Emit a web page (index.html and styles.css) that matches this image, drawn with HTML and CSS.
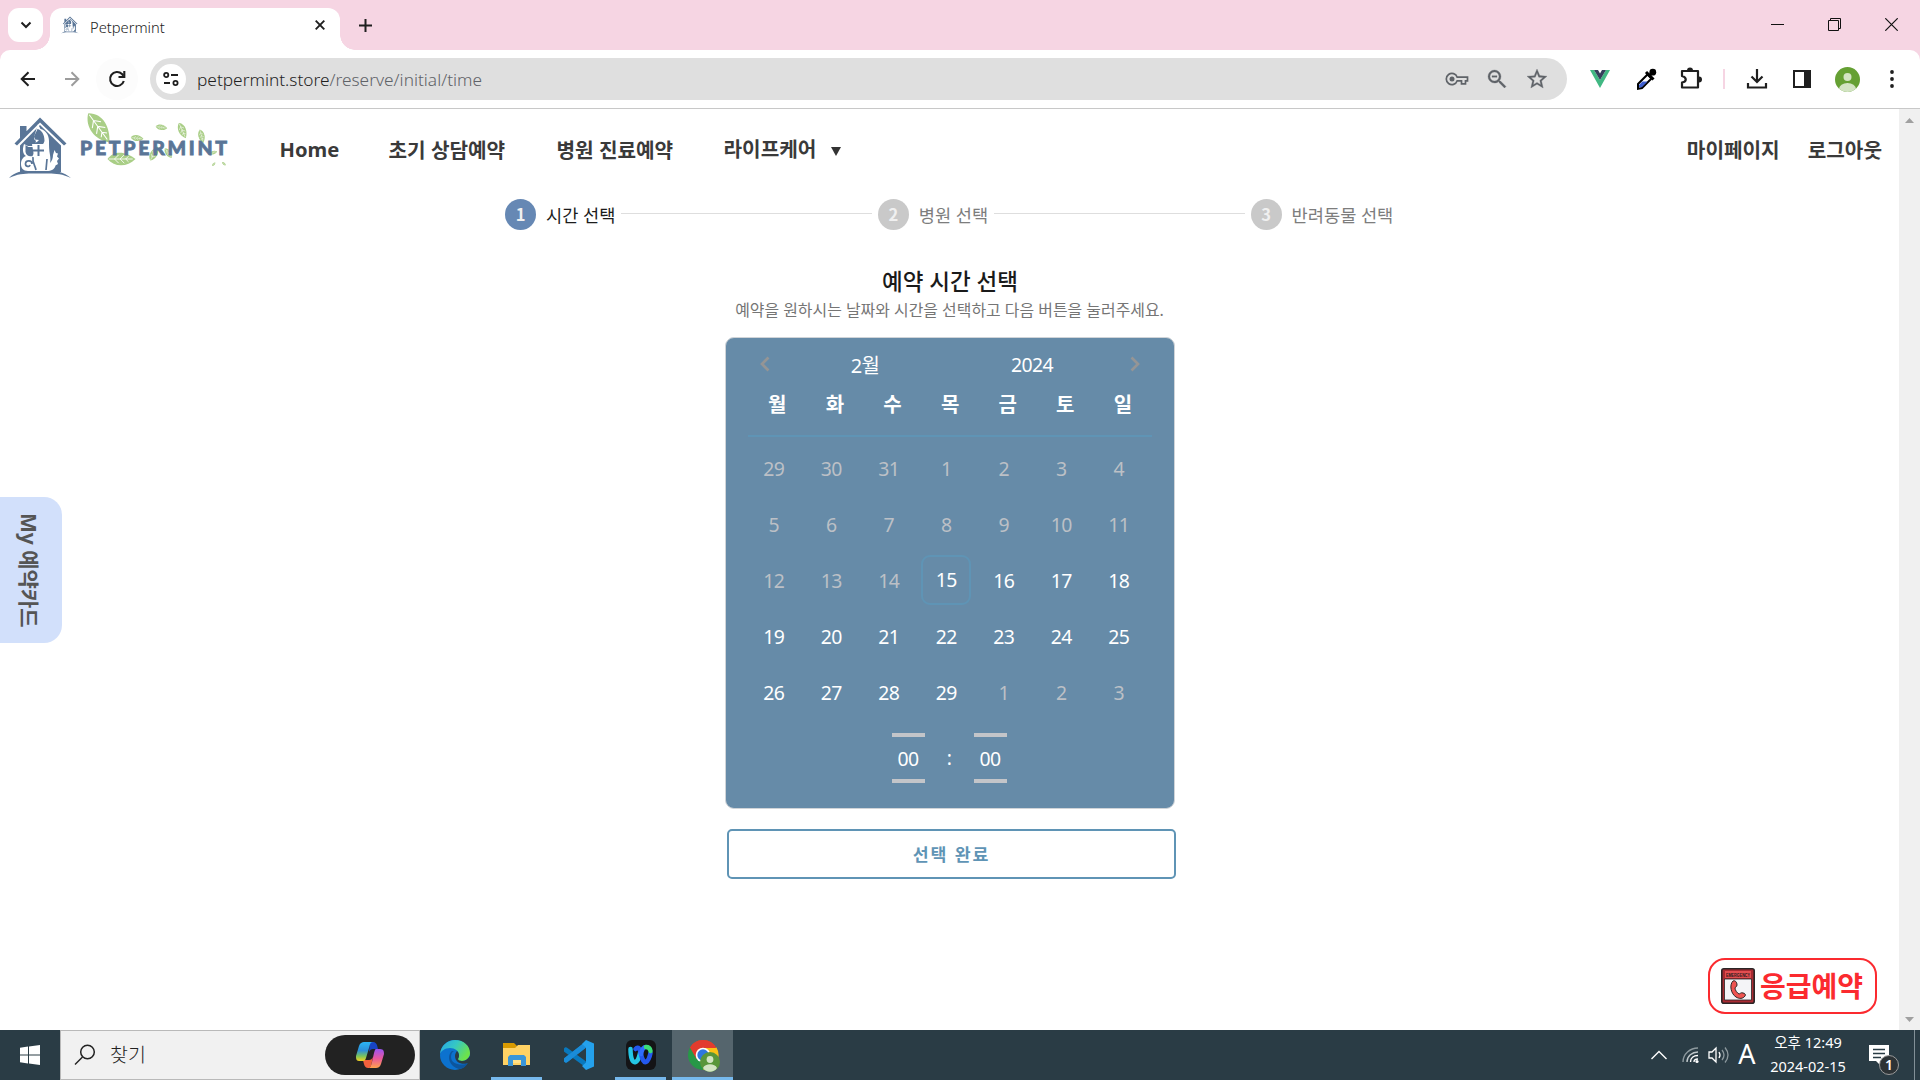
FILE: index.html
```html
<!DOCTYPE html>
<html lang="ko">
<head>
<meta charset="utf-8">
<title>Petpermint</title>
<link rel="stylesheet" href="styles.css">
</head>
<body>
<svg class="defs" width="0" height="0">
  <defs>
    <symbol id="house" viewBox="0 0 64 62">
      <path fill="#597597" d="M12 9h6.500v8L12 23.500zM32 .5 58.500 26.500l-2.500 2L32 5.500 9 28.500l-2.500-2z"/>
      <path fill="#597597" d="M32 8 53 28.500V55H12V28.500z"/>
      <path fill="#597597" d="M1 61C10 52 20 54 32 54s22-1 31 7C52 55.500 43 56.500 32 56.500S12 55.500 1 61z"/>
      <path fill="#fff" d="M30 7l2.500 5c5 1 8.500 6 8.500 12 0 5 0 9 1 14 .5 3 .5 6 0 8 2-2 3-5 3-8l1.500-5 1.500 3 2 .5-1 3 2 2-2 2.500 1 3-2.500 1.500c-1 4-4 5.500-9 5.500H20c-5 0-7-3-7-7 0-4 2-7 5-8-3-2-4-6-2-12l4 2h4l3-2 1-3-2-2c1-6 2-8 4-15z"/>
      <path fill="#597597" d="M29.500 12c4 1 7 5 7 12-1 3-2 4-4 4l-5 1-2-3 3.500-1 2-2-4-.5-1-3zM17.500 28l3 2h5c2 2 1 6-1 9-3 1-6 0-7-4z"/>
      <path fill="#fff" d="M24 27h12v12H26z"/>
      <path fill="none" stroke="#597597" stroke-width="1.700" d="M24 47c0-4-6-4-6.500-.5-.3 3 4 4 4.500 1.500M25 40c-1 5 2 8 3 13M39 42l-1 11"/>
      <path stroke="#597597" stroke-width="2" d="M30.500 28v11M25 33.500h11"/>
    </symbol>
    <symbol id="leaf" viewBox="0 0 20 10">
      <path fill="#a9ce86" d="M0 5C5-2 14 0 20 5 14 11 5 11 0 5z"/>
      <path fill="none" stroke="#fff" stroke-width=".6" d="M1 5h17M5 5l3-3M5 5l3 3M9 5l3-3M9 5l3 3M13 5l2-2M13 5l2 2"/>
    </symbol>
  </defs>
</svg>

<div class="tabstrip">
  <div class="tab-search"><svg width="12" height="8" viewBox="0 0 12 8"><path d="M1.500 1.500 6 6l4.500-4.500" fill="none" stroke="#1f1f1f" stroke-width="2"/></svg></div>
  <div class="tab">
    <svg width="18" height="18"><use href="#house"/></svg>
    <span class="tab-title">Petpermint</span>
    <svg class="tab-close" width="10" height="10" viewBox="0 0 10 10"><path d="M.7.700l8.600 8.600M9.300.700.700 9.300" stroke="#1f1f1f" stroke-width="1.900"/></svg>
  </div>
  <svg class="plus" width="13" height="13" viewBox="0 0 13 13"><path d="M6.500 0v13M0 6.500h13" stroke="#1f1f1f" stroke-width="2"/></svg>
  <div class="window-controls">
    <svg width="13" height="13" viewBox="0 0 13 13"><path d="M0 6.500h13" stroke="#111"/></svg>
    <svg width="13" height="13" viewBox="0 0 13 13"><path d="M.5 2.500h10v10H.5zM2.500 2.500v-2h10v10h-2" fill="none" stroke="#111"/></svg>
    <svg width="13" height="13" viewBox="0 0 13 13"><path d="M.3.300l12.400 12.400M12.700.300.300 12.700" stroke="#111" stroke-width="1.200"/></svg>
  </div>
</div>

<div class="toolbar-wrap">
<div class="toolbar">
  <svg class="back" width="16" height="16" viewBox="0 0 16 16"><path d="M15 8H2M8.500 1.200 1.700 8l6.800 6.800" fill="none" stroke="#1f1f1f" stroke-width="2"/></svg>
  <svg class="forward" width="16" height="16" viewBox="0 0 16 16"><path d="M1 8h13M7.500 1.200 14.300 8l-6.800 6.800" fill="none" stroke="#9c9c9c" stroke-width="2"/></svg>
  <div class="reload"><svg width="18" height="18" viewBox="0 0 18 18"><path d="M15.800 11A7 7 0 1 1 14 4l1.500 1.700" fill="none" stroke="#1f1f1f" stroke-width="2.100"/><path d="M16.300 1v6H10.500" fill="none" stroke="#1f1f1f" stroke-width="2.100"/></svg></div>
  <div class="omnibox">
    <div class="site-info"><svg width="16" height="14" viewBox="0 0 16 14"><g fill="none" stroke="#1f1f1f" stroke-width="1.800"><circle cx="3.200" cy="3" r="2.100"/><path d="M8 3h7M1 11h6"/><circle cx="12.500" cy="11" r="2.100"/></g></svg></div>
    <span class="url">petpermint.store<span class="path">/reserve/initial/time</span></span>
    <div class="omni-icons">
      <svg width="24" height="24" viewBox="0 0 24 24"><g fill="none" stroke="#5f6368" stroke-width="1.700"><path d="M12.200 10.200h10.300v3.600h-2v3h-4v-3h-4.300a5.600 5.600 0 1 1 0-3.600z"/></g><circle cx="7" cy="12" r="2.500" fill="#5f6368"/></svg>
      <svg width="24" height="24" viewBox="0 0 24 24"><path fill="#5f6368" stroke="#5f6368" stroke-width=".3" d="M15.500 14h-.79l-.28-.27A6.471 6.471 0 0 0 16 9.500 6.500 6.500 0 1 0 9.500 16c1.610 0 3.090-.59 4.230-1.570l.27.28v.79l5.500 5.500L21 19.500l-5.500-5.500zm-6 0C7.010 14 5 11.990 5 9.500S7.010 5 9.500 5 14 7.010 14 9.500 11.990 14 9.500 14zM7 8.700h5v1.500H7z"/></svg>
      <svg width="24" height="24" viewBox="0 0 24 24"><path fill="#5f6368" stroke="#5f6368" stroke-width=".3" d="M22 9.240l-7.190-.62L12 2 9.190 8.630 2 9.240l5.460 4.730L5.820 21 12 17.270 18.180 21l-1.630-7.030L22 9.240zM12 15.400l-3.760 2.270 1-4.280-3.320-2.880 4.380-.38L12 6.100l1.710 4.040 4.380.38-3.320 2.880 1 4.280L12 15.400z"/></svg>
    </div>
  </div>
  <div class="extensions">
    <svg width="24" height="24" viewBox="0 0 24 24"><path fill="#41b883" d="M2 3h4l6 10 6-10h4L12 21z"/><path fill="#35405c" d="M6 3h4l2 3.500L14 3h4l-6 10z"/></svg>
    <svg class="e2" width="24" height="24" viewBox="0 0 24 24"><path fill="#fff" stroke="#000" stroke-width="2" d="M4 17 13.500 7.500l4 4L8 21l-4 .800z"/><path fill="#3f5fd0" d="M8.500 14.500h5L8 20l-3 .500V18z"/><path d="m12 5 7.500 7.500M15 9l4-4" stroke="#000" stroke-width="3"/><circle cx="18.800" cy="5.200" r="3.400"/></svg>
    <svg class="e3" width="24" height="24" viewBox="0 0 24 24"><path fill="none" stroke="#1f1f1f" stroke-width="2.200" stroke-linejoin="round" d="M3 4h16v16.500H3v-5c5-1 5-5 0-6.500z"/><path fill="#1f1f1f" d="M8 3.500a3 3 0 0 1 6 0zM20 9.500a3 3 0 0 1 0 6z"/></svg>
    <i class="divider"></i>
    <svg class="e4" width="24" height="24" viewBox="0 0 24 24"><path fill="none" stroke="#1f1f1f" stroke-width="2.200" d="M12 2v13M6.500 9.500 12 15l5.500-5.500M3 16v4.500h18V16"/></svg>
    <svg class="e4" width="24" height="24" viewBox="0 0 24 24"><path fill="none" stroke="#1f1f1f" stroke-width="2" d="M4 4h16v16H4z"/><path fill="#1f1f1f" d="M14 4h6v16h-6z"/></svg>
    <svg class="e5" width="25" height="25" viewBox="0 0 25 25"><defs><clipPath id="av"><circle cx="12.500" cy="12.500" r="12.500"/></clipPath></defs><g clip-path="url(#av)"><path fill="#65a033" d="M0 0h25v25H0z"/><g fill="#d3e4c3"><circle cx="12.500" cy="10" r="4"/><ellipse cx="12.500" cy="22" rx="8.500" ry="6"/></g></g></svg>
    <svg class="e4" width="24" height="24" viewBox="0 0 24 24"><g fill="#1f1f1f"><circle cx="12" cy="5" r="1.900"/><circle cx="12" cy="12" r="1.900"/><circle cx="12" cy="19" r="1.900"/></g></svg>
  </div>
</div>
</div>

<div class="viewport">
  <main class="page">
    <nav class="nav">
      <svg class="logo" width="240" height="76" viewBox="0 0 240 76">
        <use href="#house" x="8" y="8" width="64" height="62"/>
        <g>
          <use href="#leaf" width="36" height="18" transform="translate(95.500 -1) rotate(54)"/>
          <use href="#leaf" width="29" height="14" transform="translate(107 43)"/>
          <use href="#leaf" width="12" height="7" transform="translate(156 14) rotate(8)"/>
          <use href="#leaf" width="13" height="7" transform="translate(131 25) rotate(6)"/>
          <use href="#leaf" width="17" height="9" transform="translate(183 12) rotate(66)"/>
          <use href="#leaf" width="15" height="7" transform="translate(203 19) rotate(75)"/>
          <use href="#leaf" width="19" height="8" transform="translate(146 51) rotate(-62)"/>
          <use href="#leaf" width="13" height="6" transform="translate(167 37) rotate(55)"/>
          <use href="#leaf" width="8" height="4" transform="translate(209 43) rotate(-20)"/>
          <use href="#leaf" width="5" height="3" transform="translate(211 56) rotate(-50)"/>
          <use href="#leaf" width="5" height="3" transform="translate(223 52) rotate(40)"/>
        </g>
        <text class="wordmark" x="80" y="46" textLength="147">PETPERMINT</text>
      </svg>
      <a class="n-home">Home</a><a class="n-first">초기 상담예약</a><a class="n-hosp">병원 진료예약</a><a class="n-life">라이프케어</a>
      <svg class="caret" width="10" height="9" viewBox="0 0 10 9"><path fill="#333" d="M0 0h10L5 9z"/></svg>
      <a class="n-my">마이페이지</a><a class="n-out">로그아웃</a>
    </nav>

    <div class="stepper">
      <div class="step active"><b>1</b><span>시간 선택</span><i></i></div>
      <div class="step"><b>2</b><span>병원 선택</span><i></i></div>
      <div class="step last"><b>3</b><span>반려동물 선택</span></div>
    </div>

    <section class="picker">
      <h1>예약 시간 선택</h1>
      <p>예약을 원하시는 날짜와 시간을 선택하고 다음 버튼을 눌러주세요.</p>
      <div class="calendar">
        <div class="cal-head">
          <svg width="10" height="16" viewBox="0 0 10 16"><path d="M8.500 1.500 2 8l6.500 6.500" fill="none" stroke="#959595" stroke-width="2.700"/></svg>
          <span class="month">2월</span><span class="year">2024</span>
          <svg width="10" height="16" viewBox="0 0 10 16"><path d="M1.500 1.500 8 8l-6.500 6.500" fill="none" stroke="#959595" stroke-width="2.700"/></svg>
        </div>
        <div class="weekdays"><span>월</span><span>화</span><span>수</span><span>목</span><span>금</span><span>토</span><span>일</span></div>
        <div class="days">
          <span class="off">29</span><span class="off">30</span><span class="off">31</span><span class="off">1</span><span class="off">2</span><span class="off">3</span><span class="off">4</span>
          <span class="off">5</span><span class="off">6</span><span class="off">7</span><span class="off">8</span><span class="off">9</span><span class="off">10</span><span class="off">11</span>
          <span class="off">12</span><span class="off">13</span><span class="off">14</span><span class="today">15</span><span>16</span><span>17</span><span>18</span>
          <span>19</span><span>20</span><span>21</span><span>22</span><span>23</span><span>24</span><span>25</span>
          <span>26</span><span>27</span><span>28</span><span>29</span><span class="off">1</span><span class="off">2</span><span class="off">3</span>
        </div>
        <div class="time"><span class="unit">00</span><span class="colon">:</span><span class="unit">00</span></div>
      </div>
      <button class="confirm">선택 완료</button>
    </section>
    <div class="side-card"><span>My 예약카드</span></div>
    <div class="emergency">
      <svg width="34" height="36" viewBox="0 0 34 36"><rect x=".8" y=".8" width="32.400" height="34.400" rx="2" fill="#a92b32" stroke="#2b2526" stroke-width="1.600"/><path fill="#e34e50" d="M4 3h26v7H4z"/><path fill="#f4f4f7" stroke="#2b2526" stroke-width=".8" d="M3.500 11h27v21h-27z"/><text x="5" y="8.500" class="tiny" textLength="24" lengthAdjust="spacingAndGlyphs">EMERGENCY</text><path fill="#ef5350" stroke="#2b2526" stroke-width="1" d="M12 13c2-1 4 1 4 4 0 2-2 2-2 3 0 2 2 5 4 6 1 0 2-2 4-1 2 0 3 2 2 3-2 3-6 3-9 1-5-3-7-12-3-16z"/></svg>
      <span>응급예약</span>
    </div>
  </main>
  <div class="scrollbar">
    <svg width="9" height="5" viewBox="0 0 9 5"><path fill="#a0a0a0" d="M0 5h9L4.500 0z"/></svg>
    <svg width="9" height="5" viewBox="0 0 9 5"><path fill="#a0a0a0" d="M0 0h9L4.500 5z"/></svg>
  </div>
</div>

<div class="taskbar">
  <div class="start"><svg width="20" height="20" viewBox="0 0 20 20"><path fill="#fff" d="M0 2.800 8 1.600v7.900H0zM9 1.500 20 0v9.500H9zM0 10.500h8v7.900l-8-1.200zM9 10.500h11V20L9 18.500z"/></svg></div>
  <div class="search">
    <svg width="22" height="22" viewBox="0 0 22 22"><circle cx="13.500" cy="8" r="6.800" fill="none" stroke="#222" stroke-width="1.500"/><path d="M8.500 13 1 20.500" stroke="#222" stroke-width="1.500"/></svg>
    <span>찾기</span>
    <div class="copilot"><svg width="30" height="28" viewBox="0 0 30 28">
      <defs>
        <linearGradient id="c1" x1="0" y1="0" x2="0" y2="1"><stop offset="0" stop-color="#2bb5f5"/><stop offset=".45" stop-color="#2d8fd8"/><stop offset=".75" stop-color="#7cc45a"/><stop offset="1" stop-color="#f5d020"/></linearGradient>
        <linearGradient id="c2" x1="0" y1="0" x2="0" y2="1"><stop offset="0" stop-color="#9a53f3"/><stop offset=".5" stop-color="#e9589c"/><stop offset="1" stop-color="#ffa24b"/></linearGradient>
      </defs>
      <path fill="#1744c4" d="M15 1h3c3 0 4 2 5 7h-5c-2 0-3 1-4 3z"/><path fill="#f2603c" d="M8 19h6c2 0 3-1 4-3l-2 9c-1 2-2 2-3 2-3 0-4-3-5-8z"/>
      <path fill="url(#c1)" d="M9 1h9c-3 0-3 3-4 6l-3 10c-1 3-2 3-4 3H4c-3 0-3-3-3-5L4 5c1-3 3-4 5-4z"/>
      <path fill="url(#c2)" d="M21 8h4c4 0 4 3 4 5l-3 10c-1 3-3 4-5 4h-8c3 0 3-3 4-6l2-9c1-3 1-4 2-4z"/></svg></div>
  </div>
  <div class="apps">
    <div class="app"><svg width="30" height="30" viewBox="0 0 30 30">
      <defs><linearGradient id="ed" x1="0" y1="0" x2="1" y2=".5"><stop offset="0" stop-color="#26a4e6"/><stop offset=".5" stop-color="#35c7c5"/><stop offset="1" stop-color="#6de34a"/></linearGradient></defs>
      <circle cx="15" cy="15" r="15" fill="#0c72cf"/><path fill="url(#ed)" d="M0 14C1 5 8 0 15 0c9 0 15 6 15 13 0 5-4 8-8 8-3 0-4-1-4-2 0-1 1-1 1-4 0-4-4-7-9-7-5 0-9 3-10 6z"/><path fill="#0d559d" d="M12 11c-5 4-4 15 7 18 4 0 7-3 9-6-5 3-17 2-17-6 0-3 1-5 3-6z"/><path fill="#2a3c45" d="M17 11c3 3 2 6 1 8 0 1 2 2 4 2 3 0 6-2 8-5l.5 3-1.500 3.500c-5 3-14 1-14-6.500 0-2 1-4 2-5z"/></svg></div>
    <div class="app run"><svg width="30" height="30" viewBox="0 0 30 30"><path fill="#d99a00" d="M1 3h11l3 3v6H1z"/><path fill="#ffd264" d="M1 8h12l3-3h12v20H1z"/><path fill="#3a96d8" d="M6 26V17l2-2h14l2 2v9h-5v-6h-8v6z"/><path fill="#fff0b0" d="M11 20h8v3h-8z" opacity=".5"/></svg></div>
    <div class="app"><svg width="30" height="30" viewBox="0 0 30 30"><path d="M2 10 20 23M2 20 20 6" stroke="#0878bd" stroke-width="5" stroke-linecap="round"/><path d="M2 20 20 6" stroke="#1a8cd8" stroke-width="5" stroke-linecap="round"/><path fill="#24a1ec" d="m22 0 8 3.500v23L22 30l-4-4 4-3.500v-15L18 4z"/></svg></div>
    <div class="app run"><svg width="30" height="30" viewBox="0 0 30 30"><rect width="30" height="30" rx="6" fill="#141416"/><g fill="none" stroke-width="4.500" stroke-linecap="round"><path stroke="#24c6e4" d="M4.500 9c0 9 2 14 5 13s4-6 5-11"/><path stroke="#2458ee" d="M9.500 9c3-3 4.500 0 5.500 5s3 9 5 8 3.500-4 4.500-9"/><path stroke="#2f6dff" d="M15 14c1-5 2.500-7 5-7"/><path stroke="#3ddc77" d="M20 7c2 0 4 1 4.500 4"/></g></svg></div>
    <div class="app run current"><svg width="34" height="34" viewBox="0 0 34 34"><circle cx="17" cy="17" r="15" fill="#279847"/><path fill="#e33b2e" d="M4 9.500a15 15 0 0 1 26 0L17 17z"/><path fill="#fbc116" d="M17 9.500h13.500A15 15 0 0 1 17 32l6-11z"/><path fill="#e33b2e" d="M4 9.500 10.500 21 17 10h13.300A15 15 0 0 0 4 9.500z"/><circle cx="17" cy="17" r="7.300" fill="#fff"/><circle cx="17" cy="17" r="5.700" fill="#2f77df"/><circle cx="24" cy="24" r="10" fill="#59963a"/><circle cx="24" cy="21.500" r="3.400" fill="#d3e4c3"/><path fill="#d3e4c3" d="M17 30c2-5 12-5 14 0-3 5-11 5-14 0z"/></svg></div>
  </div>
  <div class="tray">
    <svg class="t1" width="16" height="10" viewBox="0 0 16 10"><path d="M.5 9 8 1.500 15.500 9" fill="none" stroke="#fff" stroke-width="1.400"/></svg>
    <svg class="t2" width="18" height="18" viewBox="0 0 18 18"><g fill="none" stroke-width="1.400"><path stroke="#8d999e" d="M1 16C1 8 8 2 16 2"/><path stroke="#c0c8cb" d="M5 16C5 10 10 6 16 6"/><path stroke="#fff" d="M8.500 16c0-4 3-6.500 7.500-6.500M12 16c0-2 1-3 4-3"/></g><circle cx="15" cy="15.500" r="1.600" fill="#fff"/></svg>
    <svg class="t3" width="22" height="18" viewBox="0 0 22 18"><path d="M1 6h3l4-4v14l-4-4H1z" fill="none" stroke="#fff" stroke-width="1.300"/><path d="M11 6q2 3 0 6" fill="none" stroke="#fff" stroke-width="1.300"/><path d="M14 4q4 5 0 10M17 1.500q6 7.500 0 15" fill="none" stroke="#8d999e" stroke-width="1.300"/></svg>
    <span class="ime">A</span>
    <div class="clock"><span>오후 12:49</span><span>2024-02-15</span></div>
    <div class="notes"><svg width="20" height="20" viewBox="0 0 20 20"><path fill="#fff" d="M0 0h20v16h-9v4l-4-4H0z"/><path stroke="#2a3c45" stroke-width="1.400" d="M4 4.500h12M4 8.500h12M4 12.500h8"/></svg><b>1</b></div>
  </div>
</div>
</body>
</html>
```
FILE: styles.css
```css
* { box-sizing: border-box; }
body {
  margin: 0; width: 1920px; height: 1080px; overflow: hidden;
  display: flex; flex-direction: column; background: #fff;
  font-family: "Noto Sans", "Noto Sans CJK KR", sans-serif; color: #222;
}
svg { display: block; flex: none; }
.defs { position: absolute; }
span, a { white-space: nowrap; }

/* Browser tab strip */
.tabstrip { height: 50px; flex: none; display: flex; background: #f6d5e3; padding-left: 8px; }
.tab-search { width: 35px; height: 34px; margin-top: 8px; border-radius: 11px; background: #fff; display: flex; align-items: center; justify-content: center; }
.tab { position: relative; width: 290px; height: 42px; margin: 8px 0 0 7px; padding: 0 15px 0 11px; border-radius: 12px 12px 0 0; background: #fff; display: flex; align-items: center; }
.tab::before, .tab::after { content: ""; position: absolute; bottom: 0; width: 15px; height: 15px; }
.tab::before { left: -15px; background: radial-gradient(circle at 0 0, transparent 14.500px, #fff 15px); }
.tab::after { right: -15px; background: radial-gradient(circle at 100% 0, transparent 14.500px, #fff 15px); }
.tab > svg { margin-bottom: 8px; }
.tab-title { flex: 1; margin: 0 0 4px 11px; font-size: 14.700px; font-weight: 300; }
.plus { margin: 19px 0 0 19px; }
.window-controls { margin: 18px 22px 0 auto; display: flex; gap: 44px; }

/* Browser toolbar */
.toolbar-wrap { height: 59px; flex: none; background: #f6d5e3; }
.toolbar { height: 59px; display: flex; align-items: center; padding: 0 16px 0 20px; background: #fff; border-radius: 10px 10px 0 0; border-bottom: 1px solid #c8c8c8; }
.forward { margin-left: 28px; }
.reload { width: 42px; height: 42px; margin: 0 12px 0 16px; border-radius: 50%; background: #fcfcfc; display: flex; align-items: center; justify-content: center; }
.omnibox { width: 1417px; height: 42px; border-radius: 21px; background: #dfdfdf; display: flex; align-items: center; padding: 0 18px 0 6px; }
.site-info { width: 30px; height: 30px; border-radius: 50%; background: #fff; display: flex; align-items: center; justify-content: center; }
.url { margin-left: 11px; font-size: 17.300px; font-weight: 300; color: #1f1f1f; }
.path { color: #5f6368; }
.omni-icons { margin-left: auto; display: flex; gap: 16px; }
.extensions { margin-left: 21px; display: flex; align-items: center; }
.e2 { margin-left: 21.500px; }
.e3 { margin-left: 21px; }
.e4 { margin-left: 20.500px; }
.e5 { margin-left: 21px; }
.divider { width: 2px; height: 20px; margin-left: 20px; background: #f6d5e3; }

/* Web page area */
.viewport { flex: 1; min-height: 0; display: flex; }
.page { position: relative; width: 1899px; display: flex; flex-direction: column; align-items: flex-start; }
.scrollbar { width: 21px; background: #f0f0f0; display: flex; flex-direction: column; align-items: center; justify-content: space-between; padding: 9px 0 8px; }

.nav { width: 100%; height: 80px; display: flex; align-items: center; font-size: 20.200px; font-weight: 700; color: #3a3a3a; padding-right: 17px; }
.logo { align-self: flex-start; }
.wordmark { font: 900 19.500px Lato, sans-serif; fill: #597597; stroke: #597597; stroke-width: .8px; }
.n-home { width: 109px; margin-left: 39.500px; }
.n-first { width: 168px; }
.n-hosp { width: 167px; }
.n-life { width: 107px; margin-bottom: 1px; }
.caret { margin-top: 4px; }
.n-my { margin-left: auto; margin-right: 28px; }

.stepper { display: flex; margin: 8px 0 0 505px; height: 34px; font-size: 17.600px; color: #7d7d7d; }
.step { width: 372.800px; display: flex; align-items: center; }
.step b { width: 31px; height: 31px; flex: none; border-radius: 50%; background: #c9c9c9; color: #f0f0f0; font: 700 16.500px/31px "Noto Sans CJK KR", sans-serif; text-align: center; margin-right: 10px; }
.step i { flex: 1; height: 1px; background: #dedede; margin: 0 6px 2px; }
.active { color: #1c1c1c; }
.active b { background: #6688b4; }
.last { width: auto; }

.picker { width: 451px; margin: 34px 0 0 725px; display: flex; flex-direction: column; }
h1 { margin: 0 1px 0 0; height: 34px; line-height: 34px; font-size: 22.500px; font-weight: 500; text-align: center; color: #1a1a1a; }
.picker p { margin: 1px 2px 0 0; height: 20px; line-height: 20px; font-size: 15.930px; text-align: center; color: #757575; white-space: nowrap; display: flex; justify-content: center; }
.calendar { width: 450px; height: 472px; margin-top: 17px; border: 1px solid #d0d4d8; border-radius: 9px; background: #668ba8; color: #fff; padding: 0 22px; font-size: 19.400px; }
.cal-head { height: 52px; padding: 0 12px; display: flex; align-items: center; justify-content: space-between; letter-spacing: -.6px; }
.month { width: 166px; text-align: center; margin-left: 11px; font-size: 20px; }
.year { width: 166px; text-align: center; margin-right: 14px; }
.weekdays { width: 404px; height: 47px; padding-left: .5px; display: grid; grid-template-columns: repeat(7, 57.600px); line-height: 29px; text-align: center; font-size: 20px; font-weight: 700; border-bottom: 2px solid #5f94b5; }
.days { width: 403px; margin: 3px 0 0 -3px; display: grid; grid-template-columns: repeat(7, 57.500px); grid-auto-rows: 56.200px; place-items: center; letter-spacing: -.6px; }
.off { color: #bcc0c6; }
.today { width: 50px; height: 50px; line-height: 46px; text-align: center; border: 2px solid #5f94b5; border-radius: 9px; }
.time { margin: 12px 2px 0 0; display: flex; justify-content: center; align-items: center; letter-spacing: -.6px; }
.unit { width: 33px; height: 50px; line-height: 43px; text-align: center; border: solid #c3c5c9; border-width: 4px 0; }
.colon { width: 49px; text-align: center; }
.confirm { width: 449px; height: 50px; margin: 20px 0 0 2px; border: 2px solid #5f94b5; border-radius: 5px; background: #fff; color: #5f94b5; font: 600 17.300px "Noto Sans", "Noto Sans CJK KR", sans-serif; letter-spacing: 1.900px; padding: 0 0 2px; }

.side-card { position: absolute; left: 0; top: 388px; width: 62px; height: 146px; padding-right: 2px; border-radius: 0 18px 18px 0; background: #d2e0fb; color: #555; display: flex; align-items: center; justify-content: center; }
.side-card span { writing-mode: vertical-rl; text-orientation: sideways; font-size: 21px; font-weight: 700; }
.emergency { position: absolute; left: 1708px; top: 849px; width: 169px; height: 56px; padding-left: 11px; border: 2px solid #fb2a2f; border-radius: 17px; background: #fff; color: #fb2a2f; display: flex; align-items: center; gap: 5px; font-size: 28px; font-weight: 700; line-height: 40px; }
.emergency svg { overflow: visible; }
.tiny { font: 700 4.500px "Liberation Sans", sans-serif; fill: #2b1a1c; }

/* Windows taskbar */
.taskbar { height: 50px; flex: none; display: flex; background: #2a3c45; color: #fff; }
.start { width: 60px; display: flex; align-items: center; justify-content: center; }
.search { width: 360px; border: 1px solid #b9b9b9; background: #f1f1f1; color: #222; display: flex; align-items: center; padding: 0 4px 0 13px; font-size: 19.500px; font-weight: 300; }
.search span { margin: 0 auto 4px 14px; }
.copilot { width: 90px; height: 40px; border-radius: 20px; background: #222; display: flex; align-items: center; justify-content: center; }
.apps { display: flex; margin-left: 4px; gap: 1px; }
.app { width: 61px; height: 50px; display: flex; align-items: center; justify-content: center; position: relative; }
.run::after { content: ""; position: absolute; left: 5px; right: 5px; bottom: 0; height: 3px; background: #76b9ed; }
.current { background: #55656d; }
.current::after { left: 0; right: 0; }
.tray { margin-left: auto; display: flex; align-items: center; padding-right: 5px; }
.t2 { margin-left: 15px; }
.t3 { margin-left: 8px; }
.ime { width: 20px; margin-left: 7px; text-align: center; font-size: 27px; line-height: 48px; padding-bottom: 2px; }
.clock { width: 90px; margin-left: 6px; padding-bottom: 2px; display: flex; flex-direction: column; align-items: center; font-size: 14.500px; line-height: 24px; }
.notes { position: relative; width: 46px; height: 50px; margin-left: 16px; padding-top: 15px; border-right: 1px solid #829097; }
.notes b { position: absolute; left: 10px; top: 25px; width: 20px; height: 20px; border: 1px solid #9a9a9a; border-radius: 50%; background: #2d3336; font: 600 14px/18px "Noto Sans", sans-serif; text-align: center; }
```
